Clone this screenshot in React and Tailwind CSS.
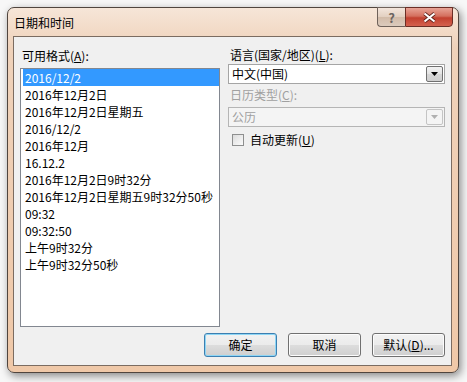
import React from 'react';

const formats = [
  '2016/12/2',
  '2016年12月2日',
  '2016年12月2日星期五',
  '2016/12/2',
  '2016年12月',
  '16.12.2',
  '2016年12月2日9时32分',
  '2016年12月2日星期五9时32分50秒',
  '09:32',
  '09:32:50',
  '上午9时32分',
  '上午9时32分50秒',
];

const font = { fontFamily: '"Noto Sans CJK SC", "Liberation Sans", sans-serif' };

const Arrow = ({ color }) => (
  <svg width="7" height="4" viewBox="0 0 7 4">
    <path d="M0 0h7L3.5 4z" fill={color} />
  </svg>
);

const Button = ({ children, primary }) => (
  <div
    className={
      'w-[73px] h-[24px] rounded-[3px] border flex items-center justify-center text-[12px] text-black bg-[linear-gradient(#f2f2f2_0%,#ebebeb_50%,#dddddd_50%,#cfcfcf_100%)] ' +
      (primary
        ? 'border-[#3c7fb1] shadow-[inset_0_0_0_1px_#8ed6f5]'
        : 'border-[#707070] shadow-[inset_0_0_0_1px_#fcfcfc]')
    }
  >
    {children}
  </div>
);

const App = () => {
  const [selected, setSelected] = React.useState(0);
  const [autoUpdate, setAutoUpdate] = React.useState(false);

  return (
    <div className="w-[467px] h-[382px] bg-[#f7f7f7] pt-[7px] pl-[7px]" style={font}>
      <div className="w-[452px] h-[366px] rounded-[7px] border border-[#50453e] bg-[linear-gradient(#f6e6d8,#efd2ba_40px,#efc8a8)] shadow-[2px_3px_8px_rgba(0,0,0,0.45)] flex flex-col">
        {/* title bar */}
        <div className="h-[28px] flex items-start">
          <div className="pl-[6px] pt-[7px] text-[12px] leading-[16px] text-black flex-1">日期和时间</div>
          <div className="flex mr-[5px] -mt-px">
            <div className="w-[28px] h-[20px] border border-[#6f625a] border-r-0 rounded-bl-[4px] bg-[linear-gradient(#f3e6dc,#e2cfc0_50%,#d2bba8_50%,#dccbbd)] flex items-center justify-center text-[13px] font-bold text-[#6b6460] leading-none">
              ?
            </div>
            <div className="w-[48px] h-[20px] border border-[#6b2e25] rounded-br-[4px] bg-[linear-gradient(#e8a496,#d46f5e_45%,#c2402f_55%,#d4614e)] flex items-center justify-center">
              <svg width="13" height="11" viewBox="0 0 13 11">
                <path d="M1.5 1.5l10 8M11.5 1.5l-10 8" stroke="#5a1f18" strokeWidth="3.6" />
                <path d="M1.5 1.5l10 8M11.5 1.5l-10 8" stroke="#fff" strokeWidth="2.2" />
              </svg>
            </div>
          </div>
        </div>

        {/* client area */}
        <div className="ml-[5px] mr-[6px] h-[330px] border border-[#7b6c61] bg-[#f0f0f0] flex flex-col">
          <div className="flex pl-[6px]">
            <div className="w-[200px] pt-[12px]">
              <div className="h-[14px] leading-[14px] text-[12px] text-black pl-[2px]">
                可用格式(<span className="underline">A</span>):
              </div>
              <div className="mt-[5px] h-[259px] border border-[#828790] bg-white pl-[2px] pr-0">
                {formats.map((f, i) => (
                  <div
                    key={i}
                    onClick={() => setSelected(i)}
                    className={
                      'h-[17px] leading-[17px] text-[12px] pl-[2px] whitespace-nowrap ' +
                      (i === selected ? 'bg-[#3399ff] text-white' : 'text-black')
                    }
                  >
                    {f}
                  </div>
                ))}
              </div>
            </div>

            <div className="w-[217px] ml-[8px] pt-[11px]">
              <div className="h-[14px] leading-[14px] text-[12px] text-black pl-[2px]">
                语言(国家/地区)(<span className="underline">L</span>):
              </div>
              <div className="mt-[2px] h-[20px] border border-[#a5a5a5] bg-white flex items-center">
                <div className="flex-1 pl-[3px] text-[12px] text-black leading-[16px]">中文(中国)</div>
                <div className="w-[17px] h-[16px] mr-px border border-[#707070] rounded-[2px] bg-[linear-gradient(#f2f2f2,#e3e3e3_50%,#d6d6d6_50%,#cfcfcf)] flex items-center justify-center">
                  <Arrow color="#000" />
                </div>
              </div>

              <div className="mt-[4px] h-[14px] leading-[14px] text-[12px] text-[#a0a0a0] pl-[2px]">
                日历类型(<span className="underline">C</span>):
              </div>
              <div className="mt-[5px] h-[20px] border border-[#b5b5b5] bg-[#f4f4f4] flex items-center">
                <div className="flex-1 pl-[3px] text-[12px] text-[#a0a0a0] leading-[16px]">公历</div>
                <div className="w-[17px] h-[16px] mr-px border border-[#c4c4c4] rounded-[2px] bg-[#f4f4f4] flex items-center justify-center">
                  <Arrow color="#b0b0b0" />
                </div>
              </div>

              <div
                className="mt-[6px] h-[14px] flex items-center pl-[4px] cursor-default"
                onClick={() => setAutoUpdate(!autoUpdate)}
              >
                <div className="w-[12px] h-[12px] border border-[#8e8f8f] bg-[linear-gradient(135deg,#dcdcdc,#fbfbfb)] flex items-center justify-center">
                  {autoUpdate && (
                    <svg width="8" height="8" viewBox="0 0 8 8">
                      <path d="M1 4l2 2 4-5" stroke="#1f3a70" strokeWidth="1.6" fill="none" />
                    </svg>
                  )}
                </div>
                <span className="ml-[6px] text-[12px] leading-[14px] text-black">
                  自动更新(<span className="underline">U</span>)
                </span>
              </div>
            </div>
          </div>

          <div className="mt-[6px] flex justify-end pr-[6px] gap-[11px]">
            <Button primary>确定</Button>
            <Button>取消</Button>
            <Button>
              默认(<span className="underline">D</span>)...
            </Button>
          </div>
        </div>
      </div>
    </div>
  );
};

export default App;
